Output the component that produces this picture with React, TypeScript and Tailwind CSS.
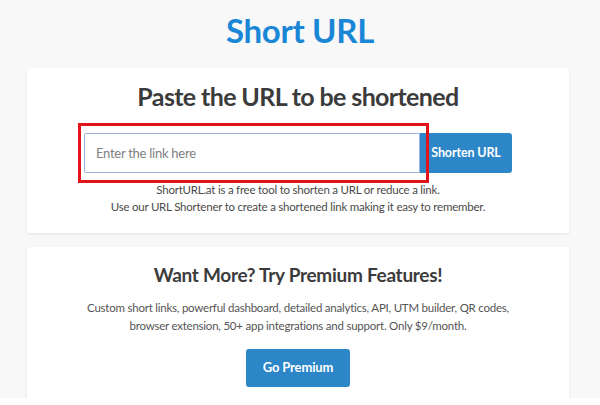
export default function App() {
  return (
    <div className="w-[600px] h-[405px] overflow-hidden bg-[#f8f8f8] font-['Lato',sans-serif]">
      {/* Page title */}
      <h1 className="pt-[10px] text-center text-[33px] leading-[40px] font-bold text-[#1a87d6] tracking-[-0.01em]">
        Short URL
      </h1>

      {/* Shortener card */}
      <div className="mt-[18px] ml-[27px] w-[542px] bg-white rounded-[3px] shadow-[0_1px_3px_rgba(0,0,0,0.09)] pt-[13px] pb-[18px] flex flex-col items-center">
        <h2 className="text-[25px] leading-[30px] font-bold text-[#3b3b3b] tracking-[-0.025em]">
          Paste the URL to be shortened
        </h2>

        <div className="relative mt-[22px] flex w-[428px]">
          <input
            type="text"
            placeholder="Enter the link here"
            className="w-[336px] h-[40px] border border-[#9fb3e2] rounded-l-[2px] pl-[11px] text-[13px] tracking-[-0.02em] text-[#444] placeholder:text-[#808080] outline-none"
          />
          <button className="w-[92px] h-[40px] bg-[#2d86c8] rounded-r-[3px] text-white text-[12.5px] font-bold tracking-[-0.01em]">
            Shorten URL
          </button>
          {/* annotation frame */}
          <div className="absolute left-[-6px] top-[-10px] w-[351px] h-[60px] border-[3px] border-[#e3131b] pointer-events-none" />
        </div>

        <p className="mt-[8px] text-center text-[11.5px] leading-[17px] text-[#4a4a4a] tracking-[-0.02em]">
          ShortURL.at is a free tool to shorten a URL or reduce a link.
          <br />
          Use our URL Shortener to create a shortened link making it easy to remember.
        </p>
      </div>

      {/* Premium card */}
      <div className="mt-[14px] ml-[27px] w-[542px] h-[151px] bg-white rounded-t-[3px] shadow-[0_1px_3px_rgba(0,0,0,0.09)] pt-[16px] flex flex-col items-center">
        <h3 className="text-[19px] leading-[24px] font-bold text-[#3b3b3b] tracking-[-0.015em]">
          Want More? Try Premium Features!
        </h3>
        <p className="mt-[12px] text-center text-[11.5px] leading-[18px] text-[#555] tracking-[-0.02em]">
          Custom short links, powerful dashboard, detailed analytics, API, UTM builder, QR codes,
          <br />
          browser extension, 50+ app integrations and support. Only $9/month.
        </p>
        <button className="mt-[14px] w-[104px] h-[38px] bg-[#2d86c8] rounded-[3px] text-white text-[13px] font-bold tracking-[-0.01em]">
          Go Premium
        </button>
      </div>
      <div className="h-[7px] bg-white" />
    </div>
  )
}
